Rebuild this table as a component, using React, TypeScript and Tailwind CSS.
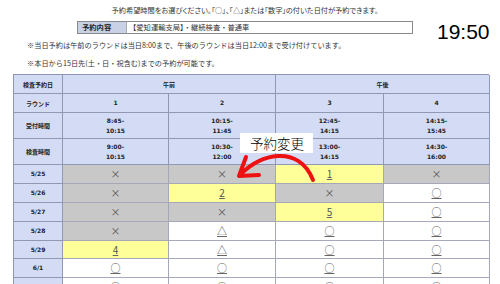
import React from "react";

type Cell = { v: string; bg: "g" | "y" | "w"; link?: boolean };

const dataRows: { date: string; cells: Cell[] }[] = [
  {
    date: "5/25",
    cells: [
      { v: "×", bg: "g" },
      { v: "×", bg: "g" },
      { v: "1", bg: "y", link: true },
      { v: "×", bg: "g" },
    ],
  },
  {
    date: "5/26",
    cells: [
      { v: "×", bg: "g" },
      { v: "2", bg: "y", link: true },
      { v: "×", bg: "g" },
      { v: "○", bg: "w", link: true },
    ],
  },
  {
    date: "5/27",
    cells: [
      { v: "×", bg: "g" },
      { v: "×", bg: "g" },
      { v: "5", bg: "y", link: true },
      { v: "○", bg: "w", link: true },
    ],
  },
  {
    date: "5/28",
    cells: [
      { v: "×", bg: "g" },
      { v: "△", bg: "w", link: true },
      { v: "○", bg: "w", link: true },
      { v: "○", bg: "w", link: true },
    ],
  },
  {
    date: "5/29",
    cells: [
      { v: "4", bg: "y", link: true },
      { v: "△", bg: "w", link: true },
      { v: "○", bg: "w", link: true },
      { v: "○", bg: "w", link: true },
    ],
  },
  {
    date: "6/1",
    cells: [
      { v: "○", bg: "w", link: true },
      { v: "○", bg: "w", link: true },
      { v: "○", bg: "w", link: true },
      { v: "○", bg: "w", link: true },
    ],
  },
  {
    date: "6/2",
    cells: [
      { v: "○", bg: "w", link: true },
      { v: "○", bg: "w", link: true },
      { v: "○", bg: "w", link: true },
      { v: "○", bg: "w", link: true },
    ],
  },
];

const rounds = [
  { no: "1", recv: ["8:45-", "10:15"], exam: ["9:00-", "10:15"] },
  { no: "2", recv: ["10:15-", "11:45"], exam: ["10:30-", "12:00"] },
  { no: "3", recv: ["12:45-", "14:15"], exam: ["13:00-", "14:15"] },
  { no: "4", recv: ["14:15-", "15:45"], exam: ["14:30-", "16:00"] },
];

const head =
  "flex items-center justify-center border-r border-b border-[#9098b4] bg-[#d3dbf5] text-[6px] font-bold text-[#222]";
const num = "font-['DejaVu_Sans',sans-serif] text-[6px] font-bold leading-[9.5px] text-center";

const bgClass = {
  g: "bg-[#c8c8c8]",
  y: "bg-[#ffff99]",
  w: "bg-white",
};

function Slot({ cell }: { cell: Cell }) {
  return (
    <div
      className={`flex items-center justify-center border-r border-b border-[#a4a8b8] ${bgClass[cell.bg]}`}
    >
      {cell.link ? (
        <span className="text-[10px] leading-none text-[#555] underline decoration-[#666] underline-offset-[1px]">
          {cell.v}
        </span>
      ) : (
        <span className="text-[10px] leading-none text-[#555]">{cell.v}</span>
      )}
    </div>
  );
}

export default function App() {
  return (
    <div className="relative h-[284px] w-[500px] overflow-hidden bg-white font-['Noto_Sans_CJK_JP',sans-serif] text-[#333]">
      <div className="w-[490px] pt-[5px] text-center text-[7.2px] leading-[10px] [font-feature-settings:'palt']">
        予約希望時間をお選びください。「○」、「△」または「数字」の付いた日付が予約できます。
      </div>

      <div className="mt-[6px] flex items-start">
        <div className="ml-[77px] flex h-[13px] w-[336px] border border-[#8a8a8a] text-[7.3px] leading-[11px]">
          <div className="w-[48px] bg-[#c9d1e6] pl-[4px] font-bold text-[#222]">予約内容</div>
          <div className="border-l border-[#aaa] pl-[2px]">【愛知運輸支局】・継続検査・普通車</div>
        </div>
        <div className="ml-[24px] mt-[4px] font-['Liberation_Sans',sans-serif] text-[21px] leading-[13px] text-black">
          19:50
        </div>
      </div>

      <div className="mt-[2px] pl-[27px] text-[7.2px] leading-[10px]">
        ※当日予約は午前のラウンドは当日8:00まで、午後のラウンドは当日12:00まで受け付けています。
      </div>
      <div className="mt-[8px] pl-[27px] text-[7.2px] leading-[10px]">
        ※本日から15日先(土・日・祝含む)までの予約が可能です。
      </div>

      <div className="ml-[13px] mt-[6px] grid w-[476px] grid-cols-[49px_106px_107px_108px_106px] grid-rows-[19px_19px_26px_26px_19px_19px_19px_19px_18px_19px_19px] border-t border-l border-[#8e96b0]">
        <div className={head}>検査予約日</div>
        <div className={`${head} col-span-2`}>午前</div>
        <div className={`${head} col-span-2`}>午後</div>

        <div className={head}>ラウンド</div>
        {rounds.map((r) => (
          <div key={r.no} className={head}>
            <span className={num}>{r.no}</span>
          </div>
        ))}

        <div className={head}>受付時間</div>
        {rounds.map((r) => (
          <div key={r.no} className={head}>
            <div className={num}>
              {r.recv[0]}
              <br />
              {r.recv[1]}
            </div>
          </div>
        ))}

        <div className={head}>検査時間</div>
        {rounds.map((r) => (
          <div key={r.no} className={head}>
            <div className={num}>
              {r.exam[0]}
              <br />
              {r.exam[1]}
            </div>
          </div>
        ))}

        {dataRows.map((row) => (
          <React.Fragment key={row.date}>
            <div className={head}>
              <span className={num}>{row.date}</span>
            </div>
            {row.cells.map((c, i) => (
              <Slot key={i} cell={c} />
            ))}
          </React.Fragment>
        ))}
      </div>

      {/* annotation */}
      <div className="absolute left-[240px] top-[133px] h-[20px] w-[73px] bg-white pl-[10px] text-[13.5px] font-light leading-[20px] text-black">
        予約変更
      </div>
      <svg
        className="pointer-events-none absolute left-0 top-0"
        width="500"
        height="284"
        viewBox="0 0 500 284"
      >
        <path
          d="M313 180 C306 162 292 155 278 156 C262 157 250 165 241 174"
          fill="none"
          stroke="#ee1111"
          strokeWidth="4"
          strokeLinecap="round"
        />
        <path
          d="M246 157 L239 176 L259 175"
          fill="none"
          stroke="#ee1111"
          strokeWidth="4"
          strokeLinecap="round"
          strokeLinejoin="round"
        />
      </svg>
    </div>
  );
}
